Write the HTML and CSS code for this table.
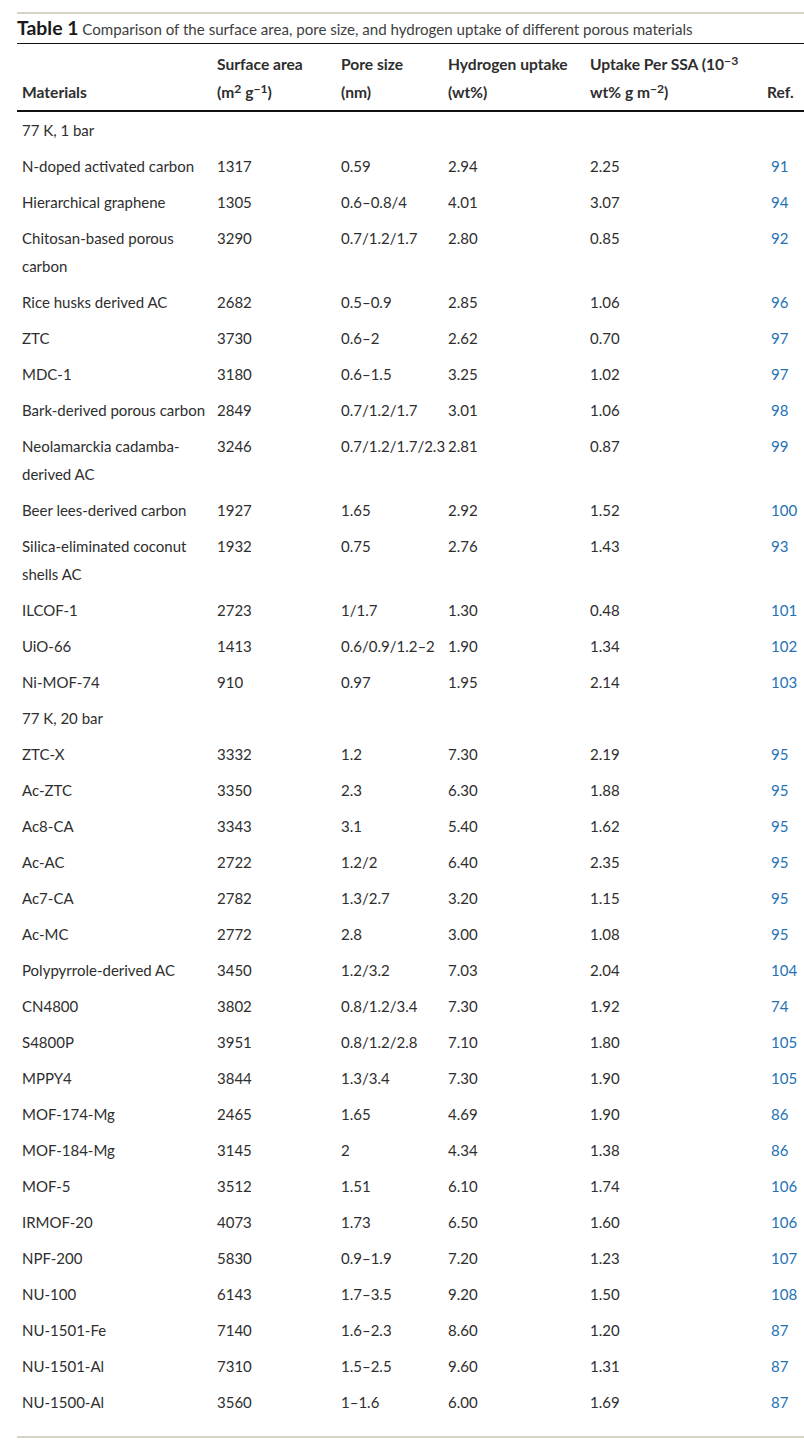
FILE: index.html
```html
<!DOCTYPE html>
<html>
<head>
<meta charset="utf-8">
<link rel="stylesheet" href="styles.css">
</head>
<body>
<div class="tbl-wrap">
  <div class="caption"><span class="cap-label">Table 1</span> Comparison of the surface area, pore size, and hydrogen uptake of different porous materials</div>
  <table class="data">
    <colgroup>
      <col class="c1"><col class="c2"><col class="c3"><col class="c4"><col class="c5"><col class="c6">
    </colgroup>
    <thead>
      <tr>
        <th>Materials</th>
        <th>Surface area<br>(m<sup>2</sup> g<sup>−1</sup>)</th>
        <th>Pore size<br>(nm)</th>
        <th>Hydrogen uptake<br>(wt%)</th>
        <th>Uptake Per SSA (10<sup>−3</sup><br>wt% g m<sup>−2</sup>)</th>
        <th>Ref.</th>
      </tr>
    </thead>
    <tbody>
      <tr><td colspan="6" class="section">77 K, 1 bar</td></tr>
      <tr><td>N-doped activated carbon</td><td>1317</td><td>0.59</td><td>2.94</td><td>2.25</td><td class="ref">91</td></tr>
      <tr><td>Hierarchical graphene</td><td>1305</td><td>0.6–0.8/4</td><td>4.01</td><td>3.07</td><td class="ref">94</td></tr>
      <tr><td>Chitosan-based porous carbon</td><td>3290</td><td>0.7/1.2/1.7</td><td>2.80</td><td>0.85</td><td class="ref">92</td></tr>
      <tr><td>Rice husks derived AC</td><td>2682</td><td>0.5–0.9</td><td>2.85</td><td>1.06</td><td class="ref">96</td></tr>
      <tr><td>ZTC</td><td>3730</td><td>0.6–2</td><td>2.62</td><td>0.70</td><td class="ref">97</td></tr>
      <tr><td>MDC-1</td><td>3180</td><td>0.6–1.5</td><td>3.25</td><td>1.02</td><td class="ref">97</td></tr>
      <tr><td>Bark-derived porous carbon</td><td>2849</td><td>0.7/1.2/1.7</td><td>3.01</td><td>1.06</td><td class="ref">98</td></tr>
      <tr><td>Neolamarckia cadamba-derived AC</td><td>3246</td><td>0.7/1.2/1.7/2.3</td><td>2.81</td><td>0.87</td><td class="ref">99</td></tr>
      <tr><td>Beer lees-derived carbon</td><td>1927</td><td>1.65</td><td>2.92</td><td>1.52</td><td class="ref">100</td></tr>
      <tr><td>Silica-eliminated coconut shells AC</td><td>1932</td><td>0.75</td><td>2.76</td><td>1.43</td><td class="ref">93</td></tr>
      <tr><td>ILCOF-1</td><td>2723</td><td>1/1.7</td><td>1.30</td><td>0.48</td><td class="ref">101</td></tr>
      <tr><td>UiO-66</td><td>1413</td><td>0.6/0.9/1.2–2</td><td>1.90</td><td>1.34</td><td class="ref">102</td></tr>
      <tr><td>Ni-MOF-74</td><td>910</td><td>0.97</td><td>1.95</td><td>2.14</td><td class="ref">103</td></tr>
      <tr><td colspan="6" class="section">77 K, 20 bar</td></tr>
      <tr><td>ZTC-X</td><td>3332</td><td>1.2</td><td>7.30</td><td>2.19</td><td class="ref">95</td></tr>
      <tr><td>Ac-ZTC</td><td>3350</td><td>2.3</td><td>6.30</td><td>1.88</td><td class="ref">95</td></tr>
      <tr><td>Ac8-CA</td><td>3343</td><td>3.1</td><td>5.40</td><td>1.62</td><td class="ref">95</td></tr>
      <tr><td>Ac-AC</td><td>2722</td><td>1.2/2</td><td>6.40</td><td>2.35</td><td class="ref">95</td></tr>
      <tr><td>Ac7-CA</td><td>2782</td><td>1.3/2.7</td><td>3.20</td><td>1.15</td><td class="ref">95</td></tr>
      <tr><td>Ac-MC</td><td>2772</td><td>2.8</td><td>3.00</td><td>1.08</td><td class="ref">95</td></tr>
      <tr><td>Polypyrrole-derived AC</td><td>3450</td><td>1.2/3.2</td><td>7.03</td><td>2.04</td><td class="ref">104</td></tr>
      <tr><td>CN4800</td><td>3802</td><td>0.8/1.2/3.4</td><td>7.30</td><td>1.92</td><td class="ref">74</td></tr>
      <tr><td>S4800P</td><td>3951</td><td>0.8/1.2/2.8</td><td>7.10</td><td>1.80</td><td class="ref">105</td></tr>
      <tr><td>MPPY4</td><td>3844</td><td>1.3/3.4</td><td>7.30</td><td>1.90</td><td class="ref">105</td></tr>
      <tr><td>MOF-174-Mg</td><td>2465</td><td>1.65</td><td>4.69</td><td>1.90</td><td class="ref">86</td></tr>
      <tr><td>MOF-184-Mg</td><td>3145</td><td>2</td><td>4.34</td><td>1.38</td><td class="ref">86</td></tr>
      <tr><td>MOF-5</td><td>3512</td><td>1.51</td><td>6.10</td><td>1.74</td><td class="ref">106</td></tr>
      <tr><td>IRMOF-20</td><td>4073</td><td>1.73</td><td>6.50</td><td>1.60</td><td class="ref">106</td></tr>
      <tr><td>NPF-200</td><td>5830</td><td>0.9–1.9</td><td>7.20</td><td>1.23</td><td class="ref">107</td></tr>
      <tr><td>NU-100</td><td>6143</td><td>1.7–3.5</td><td>9.20</td><td>1.50</td><td class="ref">108</td></tr>
      <tr><td>NU-1501-Fe</td><td>7140</td><td>1.6–2.3</td><td>8.60</td><td>1.20</td><td class="ref">87</td></tr>
      <tr><td>NU-1501-Al</td><td>7310</td><td>1.5–2.5</td><td>9.60</td><td>1.31</td><td class="ref">87</td></tr>
      <tr><td>NU-1500-Al</td><td>3560</td><td>1–1.6</td><td>6.00</td><td>1.69</td><td class="ref">87</td></tr>
    </tbody>
  </table>
</div>
</body>
</html>
```

FILE: styles.css
```css
html, body {
  margin: 0;
  padding: 0;
  background: #ffffff;
}

body {
  font-family: Lato, "Open Sans", "Liberation Sans", sans-serif;
  color: #2e2e2e;
}

.tbl-wrap {
  margin: 12px 0 0 17px;
  width: 787px;
  border-top: 2px solid #d6d2c5;
  border-bottom: 2px solid #d6d2c5;
  padding-bottom: 16px;
}

.caption {
  line-height: 27px;
  font-size: 15.1px;
  color: #404040;
  border-bottom: 1px solid #111111;
  white-space: nowrap;
}

.cap-label {
  font-weight: 700;
  font-size: 19.4px;
  color: #1a1a1a;
}

.data {
  width: 787px;
  table-layout: fixed;
  border-collapse: collapse;
  font-size: 15px;
}

.c1 { width: 195px; }
.c2 { width: 124px; }
.c3 { width: 107px; }
.c4 { width: 142px; }
.c5 { width: 181px; }
.c6 { width: 38px; }

.data th {
  text-align: left;
  vertical-align: bottom;
  font-weight: 700;
  font-size: 15.6px;
  line-height: 28px;
  padding: 6px 5px 4px 5px;
  border-bottom: 2px solid #111111;
  color: #2e2e2e;
  white-space: nowrap;
}

.data th:last-child {
  padding-left: 1px;
  padding-right: 0;
}

.data sup {
  line-height: 0;
  font-size: 0.78em;
  vertical-align: 0.45em;
}

.data td {
  text-align: left;
  vertical-align: top;
  line-height: 28px;
  padding: 4px 5px;
  white-space: nowrap;
}

.data td:first-child {
  white-space: normal;
}

.data td.section {
  white-space: nowrap;
}

.data td.ref {
  color: #2372b5;
  padding-right: 0;
}
```
